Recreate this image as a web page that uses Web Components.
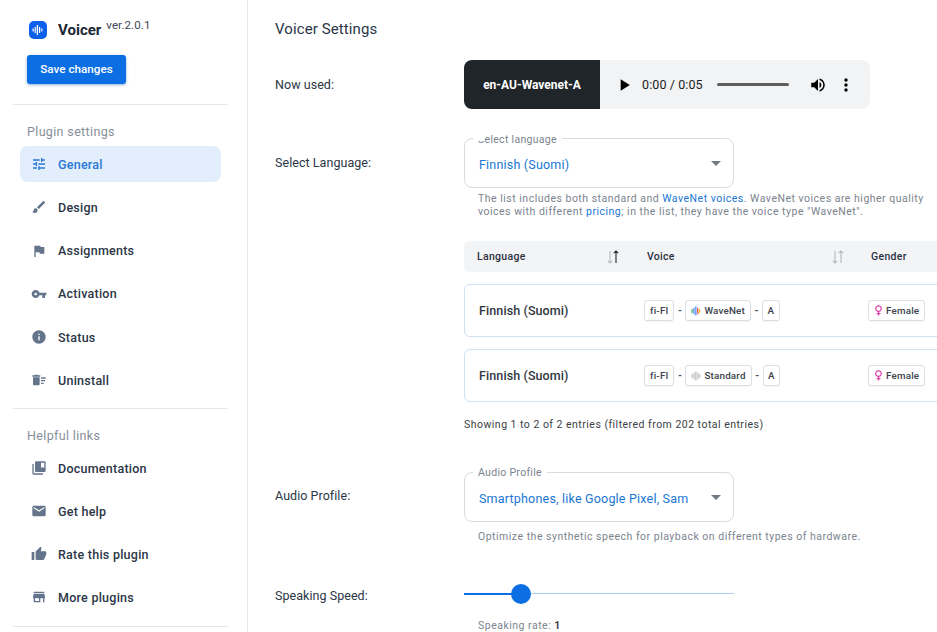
<!DOCTYPE html>
<html lang="en">
<head>
<meta charset="utf-8">
<title>Voicer Settings</title>
<style>
  html, body { margin: 0; height: 632px; overflow: hidden; background: #fff; }
  body { font-family: Roboto, "Liberation Sans", sans-serif; color: #2b3646; }
</style>
</head>
<body>
<voicer-app>
  <voicer-sidebar slot="side">
    <nav-group title="Plugin settings" slot="first">
      <nav-item icon="tune" active>General</nav-item>
      <nav-item icon="brush">Design</nav-item>
      <nav-item icon="flag">Assignments</nav-item>
      <nav-item icon="key">Activation</nav-item>
      <nav-item icon="info">Status</nav-item>
      <nav-item icon="sweep">Uninstall</nav-item>
    </nav-group>
    <nav-group title="Helpful links" slot="second">
      <nav-item icon="book">Documentation</nav-item>
      <nav-item icon="mail">Get help</nav-item>
      <nav-item icon="thumb">Rate this plugin</nav-item>
      <nav-item icon="store">More plugins</nav-item>
    </nav-group>
  </voicer-sidebar>
  <voicer-settings slot="main"></voicer-settings>
</voicer-app>

<script>
  const ICONS = {
    tune: 'M3 17v2h6v-2H3zM3 5v2h10V5H3zm10 16v-2h8v-2h-8v-2h-2v6h2zM7 9v2H3v2h4v2h2V9H7zm14 4v-2H11v2h10zm-6-4h2V7h4V5h-4V3h-2v6z',
    brush: 'M7 14c-1.66 0-3 1.34-3 3 0 1.31-1.16 2-2 2 .92 1.22 2.49 2 4 2 2.21 0 4-1.79 4-4 0-1.66-1.34-3-3-3zm13.71-9.37l-1.34-1.34c-.39-.39-1.02-.39-1.41 0L9 12.25 11.75 15l8.96-8.96c.39-.39.39-1.02 0-1.41z',
    flag: 'M14.4 6L14 4H5v17h2v-7h5.6l.4 2h7V6z',
    key: 'M12.65 10C11.83 7.67 9.61 6 7 6c-3.31 0-6 2.69-6 6s2.69 6 6 6c2.61 0 4.83-1.67 5.65-4H17v4h4v-4h2v-4H12.65zM7 14c-1.1 0-2-.9-2-2s.9-2 2-2 2 .9 2 2-.9 2-2 2z',
    info: 'M12 2C6.48 2 2 6.48 2 12s4.48 10 10 10 10-4.48 10-10S17.52 2 12 2zm1 15h-2v-6h2v6zm0-8h-2V7h2v2z',
    sweep: 'M15 16h4v2h-4zm0-8h7v2h-7zm0 4h6v2h-6zM3 18c0 1.1.9 2 2 2h6c1.1 0 2-.9 2-2V8H3v10zM14 5h-3l-1-1H6L5 5H2v2h12z',
    book: 'M4 6H2v14c0 1.1.9 2 2 2h14v-2H4V6zm16-4H8c-1.1 0-2 .9-2 2v12c0 1.1.9 2 2 2h12c1.1 0 2-.9 2-2V4c0-1.1-.9-2-2-2zm0 10l-2.5-1.5L15 12V4h5v8z',
    mail: 'M20 4H4c-1.1 0-1.99.9-1.99 2L2 18c0 1.1.9 2 2 2h16c1.1 0 2-.9 2-2V6c0-1.1-.9-2-2-2zm0 4l-8 5-8-5V6l8 5 8-5v2z',
    thumb: 'M1 21h4V9H1v12zm22-11c0-1.1-.9-2-2-2h-6.31l.95-4.57.03-.32c0-.41-.17-.79-.44-1.06L14.17 1 7.59 7.59C7.22 7.95 7 8.45 7 9v10c0 1.1.9 2 2 2h9c.83 0 1.54-.5 1.84-1.22l3.02-7.05c.09-.23.14-.47.14-.73v-2z',
    store: 'M20 4H4v2h16V4zm1 10v-2l-1-5H4l-1 5v2h1v6h10v-6h4v6h2v-6h1zm-9 4H6v-4h6v4z',
    play: 'M8 5v14l11-7z',
    volume: 'M3 9v6h4l5 5V4L7 9H3zm13.5 3c0-1.77-1.02-3.29-2.5-4.03v8.05c1.48-.73 2.5-2.25 2.5-4.02zM14 3.23v2.06c2.89.86 5 3.54 5 6.71s-2.11 5.85-5 6.71v2.06c4.01-.91 7-4.49 7-8.77s-2.99-7.86-7-8.77z',
    dots: 'M12 8c1.1 0 2-.9 2-2s-.9-2-2-2-2 .9-2 2 .9 2 2 2zm0 2c-1.1 0-2 .9-2 2s.9 2 2 2 2-.9 2-2-.9-2-2-2zm0 6c-1.1 0-2 .9-2 2s.9 2 2 2 2-.9 2-2-.9-2-2-2z'
  };
  const svgIcon = (name, size) =>
    `<svg width="${size}" height="${size}" viewBox="0 0 24 24" fill="currentColor" aria-hidden="true"><path d="${ICONS[name]}"/></svg>`;

  class VoicerApp extends HTMLElement {
    constructor() {
      super();
      this.attachShadow({ mode: 'open' });
      this.shadowRoot.innerHTML = `
        <style>
          :host { display: flex; width: 937px; height: 632px; overflow: hidden; }
          ::slotted([slot=side]) { flex: 0 0 248px; }
          ::slotted([slot=main]) { flex: 1 1 0; min-width: 0; }
        </style>
        <slot name="side"></slot>
        <slot name="main"></slot>`;
    }
  }

  class VoicerSidebar extends HTMLElement {
    constructor() {
      super();
      this.attachShadow({ mode: 'open' });
      this.shadowRoot.innerHTML = `
        <style>
          :host { display: block; box-sizing: border-box; height: 632px; border-right: 1px solid #e4e7eb; padding: 17px 19px 0 13px; }
          .brand { display: flex; align-items: flex-start; padding-left: 16px; height: 38px; }
          .logo { width: 18px; height: 18px; margin-top: 4px; border-radius: 5px; background: #0b5fe8; display: flex; align-items: center; justify-content: center; }
          .name { margin-left: 11px; margin-top: 4px; font-size: 15px; line-height: 18px; font-weight: 700; color: #1c2636; }
          .ver { margin-left: 5px; font-size: 11.5px; line-height: 16px; color: #3d4757; letter-spacing: .1px; }
          button { display: block; margin-left: 14px; width: 99px; height: 29px; border: 0; border-radius: 3px; background: #0b6fe3; color: #fff; font: 500 11.7px Roboto, sans-serif; box-shadow: 0 1px 3px rgba(11,80,180,.45); padding: 0 0 2px; }
          hr { border: 0; border-top: 1px solid #e4e7eb; margin: 0; }
          .rule1 { margin-top: 20px; }
          ::slotted([slot=first]) { margin-top: 17px; --title-gap: 4px; }
          ::slotted([slot=second]) { margin-top: 17px; --title-gap: 4px; --item-gap: 7px; }
          .rule2 { margin-top: 10px; }
          .rule3 { margin-top: 11px; }
        </style>
        <div class="brand">
          <span class="logo"><svg width="12" height="12" viewBox="0 0 12 12" fill="#fff"><rect x="0.5" y="4.5" width="1.2" height="3"/><rect x="2.6" y="3" width="1.2" height="6"/><rect x="4.7" y="1" width="1.4" height="10"/><rect x="7" y="3" width="1.2" height="6"/><rect x="9.2" y="4.5" width="1.2" height="3"/></svg></span>
          <span class="name">Voicer</span><span class="ver">ver.2.0.1</span>
        </div>
        <button>Save changes</button>
        <hr class="rule1">
        <slot name="first"></slot>
        <hr class="rule2">
        <slot name="second"></slot>
        <hr class="rule3">`;
    }
  }

  class NavGroup extends HTMLElement {
    constructor() {
      super();
      this.attachShadow({ mode: 'open' });
      this.shadowRoot.innerHTML = `
        <style>
          :host { display: block; }
          .title { padding-left: 14px; font-size: 12.5px; line-height: 20px; color: #868e99; letter-spacing: .35px; margin-bottom: var(--title-gap, 5px); }
        </style>
        <div class="title">${this.getAttribute('title')}</div>
        <slot></slot>`;
    }
  }

  class NavItem extends HTMLElement {
    constructor() {
      super();
      this.attachShadow({ mode: 'open' });
    }
    connectedCallback() {
      this.shadowRoot.innerHTML = `
        <style>
          :host { display: flex; align-items: center; width: 201px; height: 36px; margin: 0 0 var(--item-gap, 7.3px) 7px; border-radius: 8px; padding-left: 11px; box-sizing: border-box; font-size: 12.5px; font-weight: 500; letter-spacing: .25px; color: #2b3646; }
          :host([active]) { background: #e2eefb; color: #2a78d6; }
          .ic { display: flex; width: 16px; margin-right: 11px; color: #64748b; }
          :host([active]) .ic { color: #2a78d6; }
        </style>
        <span class="ic">${svgIcon(this.getAttribute('icon'), 16)}</span>
        <slot></slot>`;
    }
  }

  class AudioBar extends HTMLElement {
    constructor() {
      super();
      this.attachShadow({ mode: 'open' });
      this.shadowRoot.innerHTML = `
        <style>
          :host { display: flex; align-items: center; width: 406px; height: 49px; background: #f1f3f4; border-radius: 8px; overflow: hidden; color: #000; }
          .voice { width: 136px; height: 100%; background: #202529; color: #fff; display: flex; align-items: center; justify-content: center; font-size: 12px; font-weight: 700; }
          .play { display: flex; margin-left: 14px; }
          .time { margin-left: 8px; font-size: 12.5px; color: #1c1c1c; white-space: nowrap; letter-spacing: .1px; }
          .bar { width: 72px; height: 3.5px; border-radius: 2px; background: #5d5d5d; margin-left: 14px; }
          .vol { display: flex; margin-left: 20px; }
          .more { display: flex; margin-left: 9px; }
        </style>
        <div class="voice">en-AU-Wavenet-A</div>
        <span class="play">${svgIcon('play', 20)}</span>
        <span class="time">0:00 / 0:05</span>
        <span class="bar"></span>
        <span class="vol">${svgIcon('volume', 18)}</span>
        <span class="more">${svgIcon('dots', 20)}</span>`;
    }
  }

  class OutlinedSelect extends HTMLElement {
    constructor() {
      super();
      this.attachShadow({ mode: 'open' });
    }
    connectedCallback() {
      const clip = this.hasAttribute('clipped') ? '<i class="clip"></i>' : '';
      this.shadowRoot.innerHTML = `
        <style>
          :host { display: block; position: relative; box-sizing: border-box; width: 270px; height: 50px; border: 1px solid #d8dbe0; border-radius: 8px; }
          .label { position: absolute; left: 8px; top: -7px; padding: 0 5px; background: #fff; font-size: 10.5px; line-height: 14px; letter-spacing: .3px; color: #7b838e; white-space: nowrap; }
          :host([clipped]) .label { top: -6px; }
          .clip { position: absolute; left: 4px; top: 0; width: 7px; height: 8px; background: #fff; }
          .value { position: absolute; left: 14px; top: 17px; font-size: 12.5px; line-height: 18px; letter-spacing: .2px; color: #1976d2; white-space: nowrap; }
          .arrow { position: absolute; right: 12px; top: 22px; width: 0; height: 0; border: 5px solid transparent; border-bottom: 0; border-top-color: #757b84; }
        </style>
        <span class="label">${this.getAttribute('label')}${clip}</span>
        <span class="value">${this.getAttribute('value')}</span>
        <span class="arrow"></span>`;
    }
  }

  class HelpText extends HTMLElement {
    constructor() {
      super();
      this.attachShadow({ mode: 'open' });
      this.shadowRoot.innerHTML = `
        <style>
          :host { display: block; padding-left: 14px; font-size: 10.5px; line-height: 13px; letter-spacing: .5px; color: #7b838e; white-space: nowrap; }
        </style>
        <slot></slot>`;
    }
  }

  class TagChip extends HTMLElement {
    constructor() {
      super();
      this.attachShadow({ mode: 'open' });
      this.shadowRoot.innerHTML = `
        <style>
          :host { display: inline-flex; align-items: center; gap: 3px; box-sizing: border-box; height: 21px; padding: 0 5px; border: 1px solid #dcdee2; border-radius: 3px; background: #fff; font-size: 9.8px; font-weight: 500; letter-spacing: .2px; color: #3c434d; box-shadow: 0 1px 1px rgba(0,0,0,.05); white-space: nowrap; }
          :host([tight]) { padding: 0 4.5px; }
        </style>
        <slot></slot>`;
    }
  }

  class VoiceRow extends HTMLElement {
    constructor() {
      super();
      this.attachShadow({ mode: 'open' });
    }
    connectedCallback() {
      const standard = this.getAttribute('type') === 'Standard';
      const c = standard ? ['#bdbdbd', '#bdbdbd', '#bdbdbd', '#bdbdbd', '#bdbdbd'] : ['#34a853', '#4285f4', '#4285f4', '#ea4335', '#fbbc05'];
      this.shadowRoot.innerHTML = `
        <style>
          :host { display: grid; grid-template-columns: 165px 224px 1fr; align-items: center; box-sizing: border-box; width: 520px; height: 53px; margin-top: 12px; border: 1px solid #cfe0f5; border-radius: 6px; padding-left: 14px; }
          .lang { font-size: 12.5px; font-weight: 500; letter-spacing: .1px; color: #2f3741; white-space: nowrap; }
          .voice { display: flex; align-items: center; gap: 3.5px; font-size: 10px; font-weight: 700; color: #4a4f57; }
          svg { display: block; }
        </style>
        <span class="lang">Finnish (Suomi)</span>
        <span class="voice">
          <tag-chip>fi-FI</tag-chip>-<tag-chip><svg width="10" height="10" viewBox="0 0 11 11"><rect x="0.5" y="3.5" width="1.3" height="4" fill="${c[0]}"/><rect x="2.6" y="2" width="1.3" height="7" fill="${c[1]}"/><rect x="4.7" y="0.5" width="1.3" height="10" fill="${c[2]}"/><rect x="6.8" y="2" width="1.3" height="7" fill="${c[3]}"/><rect x="8.9" y="3.5" width="1.3" height="4" fill="${c[4]}"/></svg>${this.getAttribute('type')}</tag-chip>-<tag-chip tight>A</tag-chip>
        </span>
        <span><tag-chip><svg width="9" height="11" viewBox="0 0 9 11" fill="none" stroke="#e23fa8" stroke-width="1.2"><circle cx="4.5" cy="3.6" r="2.8"/><path d="M4.5 6.4v4M2.6 8.7h3.8"/></svg>Female</tag-chip></span>`;
    }
  }

  class VoiceTable extends HTMLElement {
    constructor() {
      super();
      this.attachShadow({ mode: 'open' });
      const arrows = (upDark) => `<svg width="16" height="16" viewBox="0 0 16 16" fill="none" stroke-width="1.1">
        <path d="M5 2v12M2.8 11.8 5 14l2.2-2.2" stroke="#b4b8be"/>
        <path d="M11 14V2M8.8 4.2 11 2l2.2 2.2" stroke="${upDark ? '#20262e' : '#b4b8be'}"/></svg>`;
      this.shadowRoot.innerHTML = `
        <style>
          :host { display: block; width: 520px; }
          .head { display: grid; grid-template-columns: 170px 224px 1fr; align-items: center; height: 31px; padding-left: 13px; background: #f3f4f5; border-radius: 6px; font-size: 10.5px; font-weight: 500; letter-spacing: .3px; color: #2a3140; }
          .head > span { display: flex; align-items: center; justify-content: space-between; }
          .sort { display: flex; }
          .sort.a { margin-right: 26px; }
          .sort.b { margin-right: 25px; }
          .sum { margin-top: 16px; font-size: 10.5px; line-height: 14px; letter-spacing: .48px; color: #3a4048; white-space: nowrap; }
        </style>
        <div class="head">
          <span>Language<span class="sort a">${arrows(true)}</span></span>
          <span>Voice<span class="sort b">${arrows(false)}</span></span>
          <span>Gender</span>
        </div>
        <voice-row type="WaveNet"></voice-row>
        <voice-row type="Standard"></voice-row>
        <div class="sum">Showing 1 to 2 of 2 entries (filtered from 202 total entries)</div>`;
    }
  }

  class RangeSlider extends HTMLElement {
    constructor() {
      super();
      this.attachShadow({ mode: 'open' });
      this.shadowRoot.innerHTML = `
        <style>
          :host { display: block; position: relative; width: 270px; height: 20px; }
          .track { position: absolute; left: 0; right: 0; top: 9px; height: 1px; background: #a9cdf3; }
          .fill { position: absolute; left: 0; width: 57px; top: 9px; height: 2px; background: #0b6fe3; }
          .thumb { position: absolute; left: 47px; top: 0; width: 20px; height: 20px; border-radius: 50%; background: #0b6fe3; }
        </style>
        <span class="track"></span><span class="fill"></span><span class="thumb"></span>`;
    }
  }

  class SettingRow extends HTMLElement {
    constructor() {
      super();
      this.attachShadow({ mode: 'open' });
    }
    connectedCallback() {
      this.shadowRoot.innerHTML = `
        <style>
          :host { display: grid; grid-template-columns: 189px 1fr; }
          .label { font-size: 12.5px; letter-spacing: .05px; color: #2b3646; line-height: var(--label-h, 50px); white-space: nowrap; }
        </style>
        <div class="label">${this.getAttribute('label')}</div>
        <div><slot></slot></div>`;
    }
  }

  class VoicerSettings extends HTMLElement {
    constructor() {
      super();
      this.attachShadow({ mode: 'open' });
      this.shadowRoot.innerHTML = `
        <style>
          :host { display: block; padding: 20px 0 0 27px; overflow: hidden; }
          h1 { margin: 0; font-size: 15px; line-height: 18px; font-weight: 400; letter-spacing: .1px; color: #2b3646; }
          a { color: #1976d2; text-decoration: none; }
          .now { margin-top: 22px; --label-h: 49px; }
          .lang { margin-top: 29px; }
          .lang help-text { margin-top: 4px; }
          voice-table { margin-top: 23px; }
          .profile { margin-top: 40px; --label-h: 48px; }
          .profile help-text { margin-top: 8px; }
          .speed { margin-top: 41px; --label-h: 24px; }
          .rate { margin-top: 15px; }
          b { font-weight: 700; color: #3a4048; }
        </style>
        <h1>Voicer Settings</h1>
        <setting-row class="now" label="Now used:"><audio-bar></audio-bar></setting-row>
        <setting-row class="lang" label="Select Language:">
          <outlined-select label="Select language" value="Finnish (Suomi)" clipped></outlined-select>
          <help-text>The list includes both standard and <a>WaveNet voices</a>. WaveNet voices are higher quality<br>voices with different <a>pricing</a>; in the list, they have the voice type "WaveNet".</help-text>
          <voice-table></voice-table>
        </setting-row>
        <setting-row class="profile" label="Audio Profile:">
          <outlined-select label="Audio Profile" value="Smartphones, like Google Pixel, Sam"></outlined-select>
          <help-text>Optimize the synthetic speech for playback on different types of hardware.</help-text>
        </setting-row>
        <setting-row class="speed" label="Speaking Speed:">
          <range-slider></range-slider>
          <help-text class="rate">Speaking rate: <b>1</b></help-text>
        </setting-row>`;
    }
  }

  customElements.define('voicer-app', VoicerApp);
  customElements.define('voicer-sidebar', VoicerSidebar);
  customElements.define('nav-group', NavGroup);
  customElements.define('nav-item', NavItem);
  customElements.define('audio-bar', AudioBar);
  customElements.define('outlined-select', OutlinedSelect);
  customElements.define('help-text', HelpText);
  customElements.define('tag-chip', TagChip);
  customElements.define('voice-row', VoiceRow);
  customElements.define('voice-table', VoiceTable);
  customElements.define('range-slider', RangeSlider);
  customElements.define('setting-row', SettingRow);
  customElements.define('voicer-settings', VoicerSettings);
</script>
</body>
</html>
